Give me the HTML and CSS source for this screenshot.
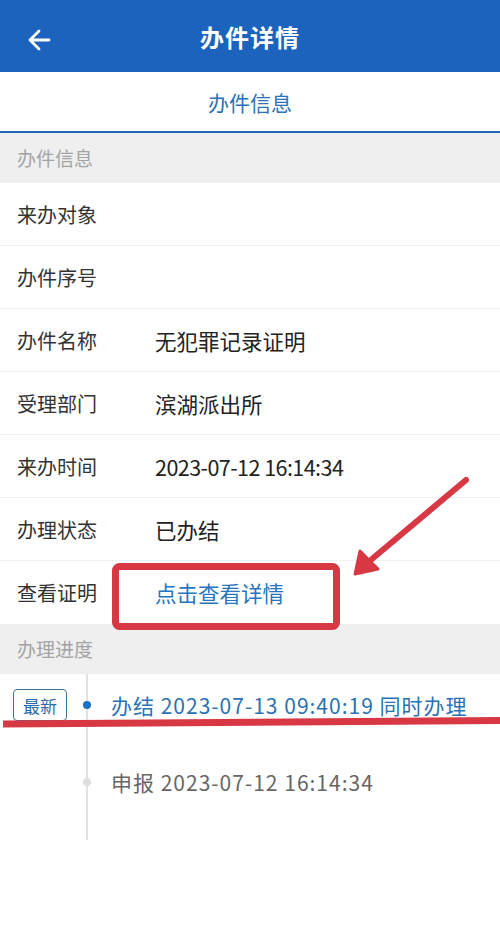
FILE: index.html
```html
<!DOCTYPE html>
<html lang="zh-CN">
<head>
<meta charset="UTF-8">
<meta name="viewport" content="width=device-width, initial-scale=1.0">
<title>办件详情</title>
<link rel="stylesheet" href="styles.css">
</head>
<body>

<div class="page">
    <div class="topbar">
        <svg class="back" width="24" height="24" viewBox="0 0 24 24">
            <path d="M22 12H3M12 3l-9 9 9 9" fill="none" stroke="#fff" stroke-width="2.8" stroke-linecap="round" stroke-linejoin="round"/>
        </svg>
        <h1>办件详情</h1>
    </div>

    <div class="tabbar">
        <div class="tab active">办件信息</div>
    </div>

    <div class="section-title">办件信息</div>
    <div class="row"><span class="label">来办对象</span><span class="value"></span></div>
    <div class="row"><span class="label">办件序号</span><span class="value"></span></div>
    <div class="row"><span class="label">办件名称</span><span class="value">无犯罪记录证明</span></div>
    <div class="row"><span class="label">受理部门</span><span class="value">滨湖派出所</span></div>
    <div class="row"><span class="label">来办时间</span><span class="value num">2023-07-12 16:14:34</span></div>
    <div class="row"><span class="label">办理状态</span><span class="value">已办结</span></div>
    <div class="row last"><span class="label">查看证明</span><span class="value link">点击查看详情</span></div>

    <div class="section-title">办理进度</div>
    <div class="timeline">
        <div class="step current">
            <span class="badge">最新</span>
            <span class="dot"></span>
            <span class="step-text">办结 2023-07-13 09:40:19 同时办理</span>
        </div>
        <div class="step">
            <span class="badge empty"></span>
            <span class="dot"></span>
            <span class="step-text">申报 2023-07-12 16:14:34</span>
        </div>
    </div>

    <!-- red marks drawn over the screen -->
    <svg class="marks" width="500" height="936" viewBox="0 0 500 936">
        <rect x="115.5" y="566.5" width="221" height="60" rx="4" fill="none" stroke="#d83844" stroke-width="7"/>
        <line x1="466" y1="480" x2="372" y2="559" stroke="#d83844" stroke-width="6" stroke-linecap="round"/>
        <polygon points="355,574 360,551 378,569" fill="#d83844" stroke="#d83844" stroke-width="3" stroke-linejoin="round"/>
        <path d="M3 724 L500 720.5" stroke="#d83844" stroke-width="7"/>
    </svg>
</div>

</body>
</html>
```

FILE: styles.css
```css
body {
    margin: 0;
    padding: 0;
    background-color: #ffffff;
    font-family: "Noto Sans CJK SC", "Noto Sans", sans-serif;
    color: #333333;
}
.page {
    position: relative;
    width: 500px;
    height: 936px;
    overflow: hidden;
}
.topbar {
    height: 72px;
    background-color: #1b63bd;
    display: flex;
    align-items: center;
    justify-content: center;
    position: relative;
}
.topbar h1 {
    margin: 0;
    color: #ffffff;
    font-size: 24px;
    font-weight: 700;
    letter-spacing: 1px;
}
.back {
    position: absolute;
    left: 27px;
    top: 28px;
}
.tabbar {
    height: 59px;
    display: flex;
    justify-content: center;
    align-items: center;
    border-bottom: 2px solid #1f68b5;
}
.tab {
    font-size: 21px;
    color: #2a73b6;
}
.section-title {
    height: 50px;
    line-height: 50px;
    background-color: #efeff0;
    color: #a3a3a3;
    font-size: 19px;
    padding-left: 17px;
}
.row {
    height: 62px;
    display: flex;
    align-items: center;
    padding-left: 17px;
    border-bottom: 1px solid #f0f0f0;
}
.row.last {
    height: 63px;
    border-bottom: none;
}
.label {
    width: 138px;
    font-size: 20px;
    color: #333333;
}
.value {
    font-size: 21.5px;
    color: #222222;
}
.value.num {
    letter-spacing: -0.55px;
}
.value.link {
    color: #2776bd;
}
.timeline {
    padding-bottom: 12px;
    background: linear-gradient(#e2e2e2, #e2e2e2) no-repeat 86px 0 / 2px 100%;
}
.step {
    display: flex;
    align-items: center;
    padding-left: 13px;
    height: 62px;
}
.step + .step {
    height: 92px;
}
.badge {
    box-sizing: border-box;
    width: 54px;
    height: 32px;
    border: 1px solid #3a7296;
    border-radius: 4px;
    color: #2a6aa8;
    font-size: 17px;
    display: flex;
    align-items: center;
    justify-content: center;
    background-color: #ffffff;
}
.badge.empty {
    visibility: hidden;
}
.dot {
    width: 8px;
    height: 8px;
    border-radius: 50%;
    margin: 0 16px;
    background-color: #dedede;
}
.current .dot {
    background-color: #1f6fc8;
}
.step-text {
    margin-left: 4px;
    font-size: 21px;
    letter-spacing: 1px;
    color: #666666;
}
.current .step-text {
    color: #2a72b3;
}
.marks {
    position: absolute;
    left: 0;
    top: 0;
    pointer-events: none;
}
```
